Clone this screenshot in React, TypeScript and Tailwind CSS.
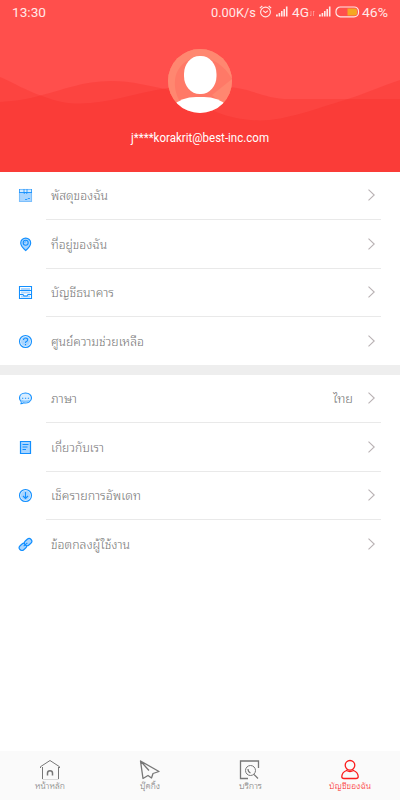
import type { ReactNode } from "react";

type MenuItem = {
  label: string;
  width: number;
  icon: ReactNode;
  value?: string;
};

const BLUE = "#128fff";
const LIGHT = "#a9d5ff";

const shipping: MenuItem[] = [
  { label: "พัสดุของฉัน", width: 57, icon: <BoxIcon /> },
  { label: "ที่อยู่ของฉัน", width: 56, icon: <PinIcon /> },
  { label: "บัญชีธนาคาร", width: 63, icon: <BankIcon /> },
  { label: "ศูนย์ความช่วยเหลือ", width: 93, icon: <HelpIcon /> },
];

const settings: MenuItem[] = [
  { label: "ภาษา", width: 26, icon: <ChatIcon />, value: "ไทย" },
  { label: "เกี่ยวกับเรา", width: 53, icon: <AboutIcon /> },
  { label: "เช็ครายการอัพเดท", width: 90, icon: <UpdateIcon /> },
  { label: "ข้อตกลงผู้ใช้งาน", width: 79, icon: <LinkIcon /> },
];

export default function App() {
  return (
    <div className="flex h-[800px] w-[400px] flex-col overflow-hidden bg-white font-['Roboto','Noto_Sans_Thai_Looped','Noto_Sans',sans-serif]">
      <ProfileHeader />
      <main className="flex-1">
        <MenuGroup items={shipping} />
        <div className="h-[9.5px] bg-[#eeeeee]" />
        <MenuGroup items={settings} />
      </main>
      <nav className="grid h-[49px] grid-cols-4 bg-[#fafafa] font-light text-[#777777]">
        <Tab label="หน้าหลัก" width={30} icon={<HomeIcon />} />
        <Tab label="บุ๊คกิ้ง" width={20} icon={<SendIcon />} />
        <Tab label="บริการ" width={23} icon={<ServiceIcon />} />
        <Tab label="บัญชีของฉัน" width={42} icon={<AccountIcon />} active />
      </nav>
    </div>
  );
}

function ProfileHeader() {
  return (
    <header className="relative h-[171.5px] shrink-0 overflow-hidden bg-[#ff4f4c] text-white">
      <svg className="absolute inset-0" width="400" height="172" viewBox="0 0 400 172">
        <g fill="#f32723" fillOpacity=".28">
          <path d="M0 77C14 83 27 91 42 96C58 102 67 103.5 80 103.5C108 103.5 135 93 165 88.5C186 84 214 84 237 88C256 91 267 99 290 99H400V172H0Z" />
          <path d="M0 102C16 101 28 99 42 95C63 90 83 81 111 81C133 81 149 86 165 89C187 93 213 120.5 260 120.5C286 120.5 318 108 345 100C364 94 382 86 400 80V172H0Z" />
        </g>
      </svg>
      <div className="relative flex h-[23px] items-center justify-between px-3 text-[#ffe8e7]">
        <SizedText text="13:30" width={34} size={13.5} />
        <div className="flex items-center">
          <SizedText text="0.00K/s" width={45} size={13.5} />
          <AlarmIcon />
          <Signal />
          <span className="ml-[4px]">
            <SizedText text="4G" width={17} size={13.5} />
          </span>
          <svg className="mt-1 ml-[1px]" width="5" height="5" viewBox="0 0 5 5" fill="none" stroke="currentColor" strokeOpacity=".5" strokeWidth=".8">
            <path d="M1 0V5M0 4L1 5M3.5 5V0L4.5 1" />
          </svg>
          <Signal />
          <svg className="ml-[4px]" width="25" height="12" viewBox="0 0 25 12">
            <rect x="1" y="1" width="22.5" height="9.8" rx="4.4" fill="none" stroke="currentColor" strokeWidth="1.2" />
            <path d="M12.5 2.5h7.5q2 0 2 2v3q0 2-2 2h-7.5z" fill="#f5a623" />
          </svg>
          <span className="ml-[2px]">
            <SizedText text="46%" width={26} size={13.5} />
          </span>
        </div>
      </div>
      <div className="relative mt-[26px] flex flex-col items-center">
        <svg width="64" height="64" viewBox="0 0 64 64">
          <defs>
            <clipPath id="avatar">
              <circle cx="32" cy="32" r="32" />
            </clipPath>
          </defs>
          <g clipPath="url(#avatar)">
            <rect width="64" height="64" fill="#ff7967" />
            <path d="M0 0H64V30C53 10 29 0 13 17C3 28 7 46 13 54H0Z" fill="#ff8770" />
            <path d="M64 30L44 46L64 64Z" fill="#ff8770" />
            <rect x="16" y="7" width="32.5" height="38" rx="15.5" ry="18" fill="#fff" />
            <path d="M4 57Q14 48 28 48H36Q50 48 60 57V64H4Z" fill="#fff" />
          </g>
        </svg>
        <div className="mt-4 flex h-4 items-center">
          <SizedText text="j****korakrit@best-inc.com" width={138} size={12} />
        </div>
      </div>
    </header>
  );
}

/* Single line of text fitted to an exact advance width */
function SizedText({ text, width, size }: { text: string; width: number; size: number }) {
  return (
    <svg className="block overflow-visible" width={width} height="18" viewBox={`0 0 ${width} 18`} fill="currentColor">
      <text x="0" y="13.5" fontSize={size} textLength={width} lengthAdjust="spacingAndGlyphs">
        {text}
      </text>
    </svg>
  );
}

function MenuGroup({ items }: { items: MenuItem[] }) {
  return (
    <ul className="font-light">
      {items.map((item, i) => (
        <li
          key={item.label}
          className={`flex pl-[18px] ${i < items.length - 1 ? "h-[48.5px]" : "h-[48px]"}`}
        >
          <span className="flex w-[28px] items-center">{item.icon}</span>
          <div
            className={`mr-[19px] flex flex-1 items-center border-b pr-[6px] pl-[5px] text-[#757575] ${
              i < items.length - 1 ? "border-[#e9e9e9]" : "border-transparent"
            }`}
          >
            <SizedText text={item.label} width={item.width} size={12} />
            <span className="ml-auto flex items-center gap-[15px]">
              {item.value && <SizedText text={item.value} width={20} size={12} />}
              <svg width="7" height="12" viewBox="0 0 7 12" fill="none" stroke="#b9b2b4" strokeWidth="1.1">
                <path d="M.5.7L6.2 6L.5 11.3" />
              </svg>
            </span>
          </div>
        </li>
      ))}
    </ul>
  );
}

function Tab({ label, width, icon, active }: { label: string; width: number; icon: ReactNode; active?: boolean }) {
  return (
    <div className={`flex flex-col items-center pt-[8px] ${active ? "text-[#fb1c1c]" : ""}`}>
      {icon}
      <span className="-mt-[6px]">
        <SizedText text={label} width={width} size={8} />
      </span>
    </div>
  );
}

function Icon({ children }: { children: ReactNode }) {
  return (
    <svg width="15" height="15" viewBox="0 0 15 15" fill="none" stroke={BLUE} strokeWidth="1.1">
      {children}
    </svg>
  );
}

function BoxIcon() {
  return (
    <Icon>
      <path d="M1.5 4.5h12v9h-12z" fill={LIGHT} stroke="#7cbffc" />
      <path d="M2 2h11v2H2z" fill="#d8edff" stroke="none" />
      <path d="M1.5 1.5h12" stroke="#7cbffc" />
      <path d="M1.5 1v3.5M13.5 1v3.5M1 4.5h13M6 1v4.5l1.5-1L9 5.5V1M7 11.5h2l1-1h2" strokeWidth=".8" />
    </Icon>
  );
}

function PinIcon() {
  return (
    <Icon>
      <path d="M7.7 13.5Q2.7 9 2.7 5.9A5 4.8 0 0 1 12.7 5.9Q12.7 9 7.7 13.5Z" fill={LIGHT} />
      <circle cx="7.7" cy="5.7" r="2.5" />
      <path d="M6.7 5.7a1 1 0 0 1 1-1" strokeWidth=".7" />
    </Icon>
  );
}

function BankIcon() {
  return (
    <Icon>
      <path d="M1.5 1.5h12v12h-12z" fill="#fff" />
      <path d="M3 3h9v2H3zM3 6.5h9v2H3zM3 10.5h9v2H3z" fill={LIGHT} stroke="none" />
      <path d="M1.5 5.5h12M1.5 9.5h3.5l1 1.5h3l1-1.5h3.5" />
    </Icon>
  );
}

function HelpIcon() {
  return (
    <Icon>
      <circle cx="7.5" cy="7.5" r="6" fill="#e3f2ff" />
      <circle cx="7.5" cy="7.5" r="4.5" fill={LIGHT} stroke="none" />
      <path d="M5.5 6Q5.5 4 7.6 4T9.600 6Q9.5 7 8.300 7.600Q7.5 8 7.5 9M7.5 10v1.300" />
    </Icon>
  );
}

function ChatIcon() {
  return (
    <Icon>
      <path d="M7.5 2C4 2 1.5 4.2 1.5 7c0 1.7.8 3 2 4L3 12.7c1.3 0 2-.5 2.6-.9 4.2.8 7.9-1.5 7.9-4.800C13.5 4.2 11 2 7.5 2Z" fill="#d8edff" />
      <path d="M3 8.5Q5 10 12.5 9Q10 13 5.5 11L3.5 12Z" fill="#8bc9ff" stroke="none" />
      <path d="M4 7.3h1.3M6.9 7.3h1.3M9.8 7.3h1.3" />
    </Icon>
  );
}

function AboutIcon() {
  return (
    <Icon>
      <path d="M2.5 1.5h10v12h-10z" fill={LIGHT} strokeWidth="1.2" />
      <path d="M4.5 4.5h6M4.5 7h5M4.5 9.5h3.5" />
    </Icon>
  );
}

function UpdateIcon() {
  return (
    <Icon>
      <circle cx="7.5" cy="7.5" r="6" fill="#e3f2ff" />
      <circle cx="7.5" cy="7.5" r="4.7" fill={LIGHT} stroke="none" />
      <path d="M7.5 4v6.5M5 8l2.5 2.5L10 8" />
    </Icon>
  );
}

function LinkIcon() {
  return (
    <Icon>
      <g transform="rotate(-42 7.5 7.5)">
        <rect x="0" y="4.8" width="8" height="5.4" rx="2.7" fill={LIGHT} strokeWidth="1.2" />
        <rect x="7" y="4.8" width="8" height="5.4" rx="2.7" fill={LIGHT} strokeWidth="1.2" />
        <path d="M5 7.5h5" strokeWidth="1.2" />
      </g>
    </Icon>
  );
}

function TabIcon({ children }: { children: ReactNode }) {
  return (
    <svg className="block shrink-0" width="22" height="22" viewBox="0 0 22 22" fill="none" stroke="currentColor" strokeWidth="1">
      {children}
    </svg>
  );
}

function HomeIcon() {
  return (
    <TabIcon>
      <path d="M1.5 9V7.7L11 1.5l9.5 6.2V9M3.5 8v12M19.5 8v12" />
      <path d="M3.5 20.5h16" strokeOpacity=".25" />
      <path d="M8.5 16.5V14q0-2.3 2.5-2.3t2.5 2.3v2.5" strokeWidth="1.5" />
    </TabIcon>
  );
}

function SendIcon() {
  return (
    <TabIcon>
      <path d="M1.5 2L20 12.5L14 14.5L12.5 19L9 16.5L4 19.5ZM1.5 2L10 11.5" strokeWidth="1.3" strokeLinejoin="round" />
    </TabIcon>
  );
}

function ServiceIcon() {
  return (
    <TabIcon>
      <path d="M9 19.5H1.5V2H19.5V9" strokeWidth="1.3" />
      <circle cx="11.5" cy="11.5" r="5" />
      <path d="M15 15.5L19 19.5M9 10q0 3 2.5 4" strokeWidth="1.2" />
    </TabIcon>
  );
}

function AccountIcon() {
  return (
    <TabIcon>
      <circle cx="11" cy="6.3" r="4.8" strokeWidth="1.3" />
      <path d="M7.5 11.5Q2.8 13.5 2.8 17.8Q2.8 19.5 5 19.5H17Q19.2 19.5 19.2 17.8Q19.2 13.5 14.5 11.5Q11 13.5 7.5 11.5Z" strokeWidth="1.3" />
    </TabIcon>
  );
}

function AlarmIcon() {
  return (
    <svg className="ml-[3px]" width="13" height="13" viewBox="0 0 13 13" fill="none" stroke="currentColor" strokeWidth="1.1">
      <circle cx="6.5" cy="7" r="4.9" />
      <path d="M.8 3.2L3.3 1M12.2 3.2L9.7 1M4.2 5.8l2.3 1.8 2.3-1.8" />
    </svg>
  );
}

function Signal() {
  return (
    <svg className="ml-[4px]" width="12" height="11" viewBox="0 0 12 11" fill="currentColor">
      <path d="M0 8.5h1.8v2H0zM2.6 7h1.6v3.5H2.6zM5 5h1.6v5.5H5zM7.4 3h1.6v7.5H7.4zM9.9.5h1.6v10H9.9z" />
    </svg>
  );
}
